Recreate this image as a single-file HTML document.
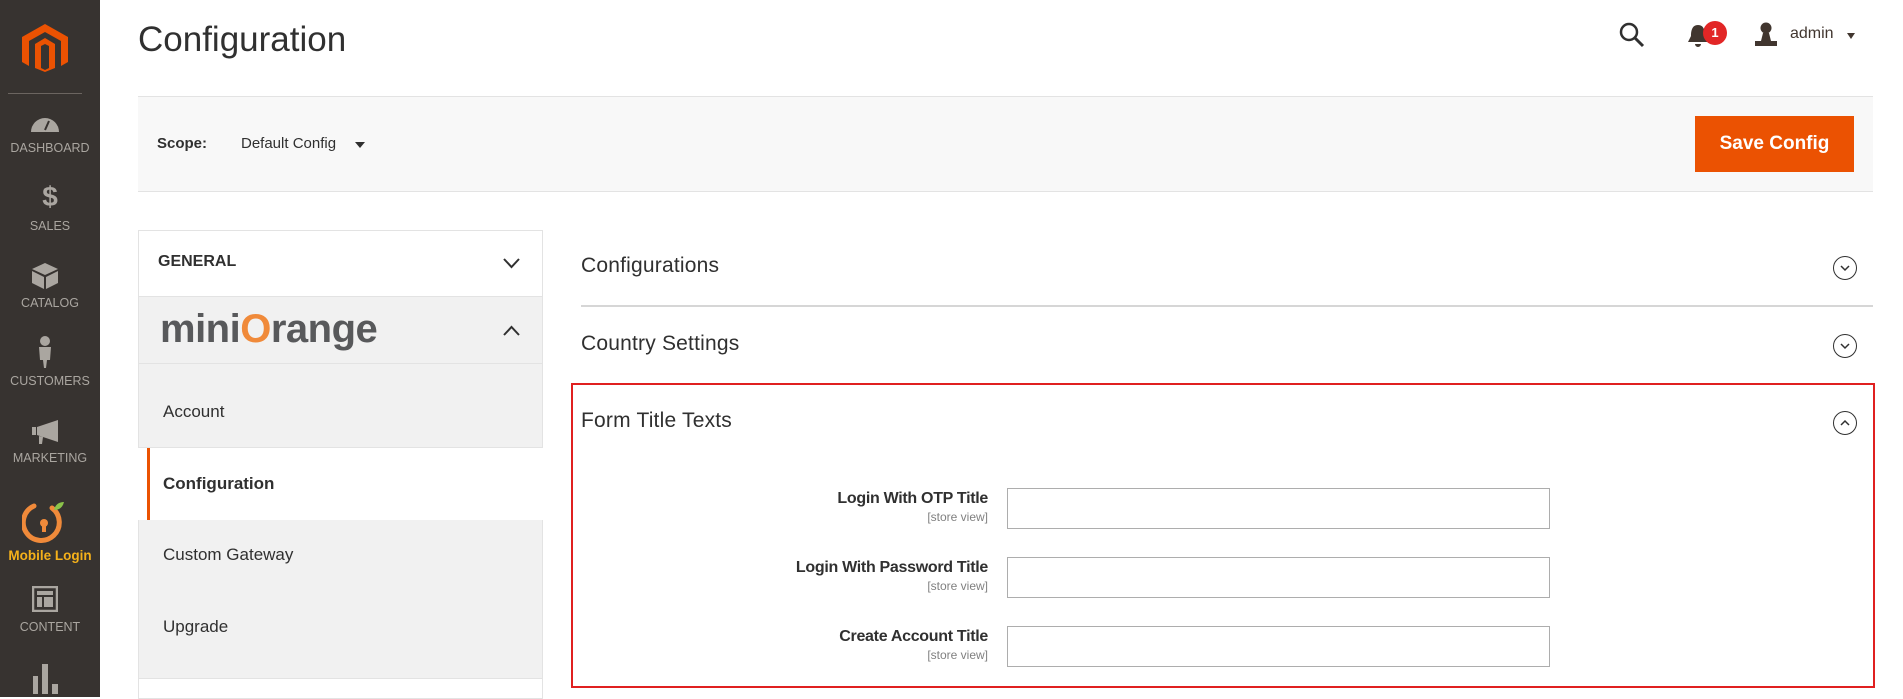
<!DOCTYPE html>
<html><head><meta charset="utf-8"><style>
*{box-sizing:border-box;margin:0;padding:0}
body{width:1903px;height:697px;overflow:hidden;background:#fff;font-family:"Liberation Sans",sans-serif;color:#303030;position:relative}
.abs{position:absolute}
#side{left:0;top:0;width:100px;height:697px;background:#373330}
.nl{position:absolute;left:0;width:100px;text-align:center;color:#aaa6a0;font-size:12.5px}
.row{position:absolute;left:138px;width:405px;border:1px solid #e3e3e3;border-top:none}
.lbl{position:absolute;width:400px;text-align:right;font-size:16px;font-weight:bold;color:#303030;left:588px;letter-spacing:-0.3px}
.sv{position:absolute;width:400px;text-align:right;font-size:12px;color:#808080;left:588px}
.inp{position:absolute;left:1007px;width:543px;height:41px;border:1px solid #adadad;background:#fff}
.sec{position:absolute;left:581px;font-size:21px;color:#303030;letter-spacing:0.2px}
.circ{position:absolute;left:1833px;width:24px;height:24px;border:1.5px solid #303030;border-radius:50%}
</style></head><body>
<div id="side" class="abs">
 <svg class="abs" style="left:22px;top:24px" width="46" height="48" viewBox="0 0 46 48"><path d="M23 0L46 13V38L39 42V17L23 8L7 17V42L0 38V13Z M13 20L23 14L33 20V44L23 48L13 44Z" fill="#eb5202"/><path d="M19 22V44L23 46L27 44V22L23 20Z" fill="#373330"/></svg>
 <div class="abs" style="left:8px;top:93px;width:74px;height:1px;background:#6b6560"></div>
 <svg class="abs" style="left:31px;top:113px" width="28" height="20" viewBox="0 0 28 20"><path d="M0 19A14 14 0 0 1 28 19Z" fill="#aaa6a0"/><path d="M14 17L18 8" stroke="#373330" stroke-width="2"/></svg>
 <div class="nl" style="top:141px">DASHBOARD</div>
 <div class="nl" style="top:181px;font-size:28px;font-weight:bold;color:#aaa6a0">$</div>
 <div class="nl" style="top:219px">SALES</div>
 <svg class="abs" style="left:32px;top:263px" width="26" height="26" viewBox="0 0 26 26"><path d="M13 0L26 6L13 12L0 6Z M0 8L12 14V26L0 20Z M26 8L14 14V26L26 20Z" fill="#aaa6a0"/></svg>
 <div class="nl" style="top:296px">CATALOG</div>
 <svg class="abs" style="left:37px;top:336px" width="16" height="32" viewBox="0 0 16 32"><circle cx="8" cy="5" r="5" fill="#aaa6a0"/><path d="M2 11H14L13 24H10L9 32H7L6 24H3Z" fill="#aaa6a0"/></svg>
 <div class="nl" style="top:374px">CUSTOMERS</div>
 <svg class="abs" style="left:32px;top:420px" width="26" height="24" viewBox="0 0 26 24"><path d="M0 7H4V15H0Z M5 7L26 0V22L5 15Z M7 16L11 17L10 24H7Z" fill="#aaa6a0"/></svg>
 <div class="nl" style="top:451px">MARKETING</div>
 <svg class="abs" style="left:22px;top:500px" width="46" height="44" viewBox="0 0 46 44"><path d="M30 8A18 18 0 1 1 12 6" fill="none" stroke="#f08a3a" stroke-width="5" stroke-linecap="round"/><circle cx="22" cy="23" r="4" fill="#f08a3a"/><rect x="20" y="24" width="4" height="8" fill="#f08a3a"/><path d="M32 10Q34 2 42 2Q40 10 32 10Z" fill="#8bc34a"/></svg>
 <div class="nl" style="top:548px;color:#f5b11a;font-weight:bold;font-size:13.5px">Mobile Login</div>
 <svg class="abs" style="left:32px;top:586px" width="26" height="26" viewBox="0 0 26 26"><rect x="1" y="1" width="24" height="24" fill="none" stroke="#aaa6a0" stroke-width="2.5"/><rect x="5" y="5" width="16" height="4" fill="#aaa6a0"/><rect x="5" y="11" width="5" height="10" fill="#aaa6a0"/><rect x="12" y="11" width="9" height="10" fill="#aaa6a0"/></svg>
 <div class="nl" style="top:620px">CONTENT</div>
 <svg class="abs" style="left:32px;top:664px" width="26" height="30" viewBox="0 0 26 30"><rect x="1" y="12" width="5" height="18" fill="#aaa6a0"/><rect x="10" y="0" width="6" height="30" fill="#aaa6a0"/><rect x="20" y="20" width="6" height="10" fill="#aaa6a0"/></svg>
</div>

<div class="abs" style="left:138px;top:20px;font-size:35px;color:#303030">Configuration</div>

<svg class="abs" style="left:1619px;top:22px" width="26" height="26" viewBox="0 0 26 26"><circle cx="10" cy="10" r="8" fill="none" stroke="#303030" stroke-width="2.5"/><path d="M16 16L24 24" stroke="#303030" stroke-width="3"/></svg>
<svg class="abs" style="left:1688px;top:24px" width="20" height="24" viewBox="0 0 20 24"><path d="M10 1C4 1 3 7 3 12L0 18H20L17 12C17 7 16 1 10 1Z M7 20A3 3 0 0 0 13 20Z" fill="#41362f"/></svg>
<div class="abs" style="left:1703px;top:21px;width:24px;height:24px;border-radius:50%;background:#e22626;color:#fff;font-size:13px;font-weight:bold;text-align:center;line-height:24px">1</div>
<svg class="abs" style="left:1755px;top:22px" width="22" height="24" viewBox="0 0 22 24"><circle cx="11" cy="6" r="5.5" fill="#41362f"/><path d="M8 11H14L16 19H22V24H0V19H6Z" fill="#41362f"/></svg>
<div class="abs" style="left:1790px;top:25px;font-size:16px;color:#41362f">admin</div>
<div class="abs" style="left:1847px;top:33px;border-left:4.5px solid transparent;border-right:4.5px solid transparent;border-top:6px solid #41362f"></div>

<div class="abs" style="left:138px;top:96px;width:1735px;height:96px;background:#f8f8f8;border-top:1px solid #e3e3e3;border-bottom:1px solid #e3e3e3"></div>
<div class="abs" style="left:157px;top:135px;font-size:15px;font-weight:bold;color:#303030">Scope:</div>
<div class="abs" style="left:241px;top:135px;font-size:15px;color:#303030">Default Config</div>
<div class="abs" style="left:355px;top:142px;border-left:5px solid transparent;border-right:5px solid transparent;border-top:6px solid #303030"></div>
<div class="abs" style="left:1695px;top:116px;width:159px;height:56px;background:#eb5202;color:#fff;font-size:19px;font-weight:bold;text-align:center;line-height:56px">Save Config</div>

<div class="row" style="top:230px;height:67px;border-top:1px solid #e3e3e3;background:#fff"></div>
<div class="abs" style="left:158px;top:253px;font-size:16px;font-weight:bold;color:#303030">GENERAL</div>
<svg class="abs" style="left:503px;top:258px" width="17" height="11" viewBox="0 0 17 11"><path d="M1 1L8.5 9L16 1" fill="none" stroke="#303030" stroke-width="2"/></svg>
<div class="row" style="top:297px;height:67px;background:#f1f1f1"></div>
<div class="abs" style="left:160px;top:306px;font-size:40px;line-height:46px;font-weight:bold;color:#58595b;letter-spacing:-0.5px">mini<span style="color:#f08a3a">O</span>range</div>
<svg class="abs" style="left:503px;top:325px" width="17" height="11" viewBox="0 0 17 11"><path d="M1 10L8.5 2L16 10" fill="none" stroke="#303030" stroke-width="2"/></svg>
<div class="row" style="top:364px;height:84px;background:#f1f1f1"></div>
<div class="abs" style="left:163px;top:402px;font-size:17px">Account</div>
<div class="abs" style="left:147px;top:448px;width:396px;height:72px;background:#fff;border-left:3px solid #eb5202"></div>
<div class="abs" style="left:163px;top:474px;font-size:17px;font-weight:bold">Configuration</div>
<div class="row" style="top:520px;height:159px;background:#f1f1f1"></div>
<div class="abs" style="left:163px;top:545px;font-size:17px">Custom Gateway</div>
<div class="abs" style="left:163px;top:617px;font-size:17px">Upgrade</div>
<div class="row" style="top:679px;height:20px;background:#fff"></div>

<div class="sec" style="top:254px">Configurations</div>
<div class="circ" style="top:256px"></div>
<svg class="abs" style="left:1840px;top:264px" width="10" height="8"><path d="M1 2L5 6L9 2" fill="none" stroke="#303030" stroke-width="1.5"/></svg>
<div class="abs" style="left:581px;top:305px;width:1292px;height:2px;background:#d6d6d6"></div>
<div class="sec" style="top:332px">Country Settings</div>
<div class="circ" style="top:334px"></div>
<svg class="abs" style="left:1840px;top:342px" width="10" height="8"><path d="M1 2L5 6L9 2" fill="none" stroke="#303030" stroke-width="1.5"/></svg>

<div class="abs" style="left:571px;top:383px;width:1304px;height:305px;border:2px solid #e02020"></div>
<div class="sec" style="top:409px">Form Title Texts</div>
<div class="circ" style="top:411px"></div>
<svg class="abs" style="left:1840px;top:419px" width="10" height="8"><path d="M1 6L5 2L9 6" fill="none" stroke="#303030" stroke-width="1.5"/></svg>

<div class="lbl" style="top:490px">Login With OTP Title</div>
<div class="sv" style="top:510px">[store view]</div>
<div class="inp" style="top:488px"></div>
<div class="lbl" style="top:559px">Login With Password Title</div>
<div class="sv" style="top:579px">[store view]</div>
<div class="inp" style="top:557px"></div>
<div class="lbl" style="top:628px">Create Account Title</div>
<div class="sv" style="top:648px">[store view]</div>
<div class="inp" style="top:626px"></div>
</body></html>
